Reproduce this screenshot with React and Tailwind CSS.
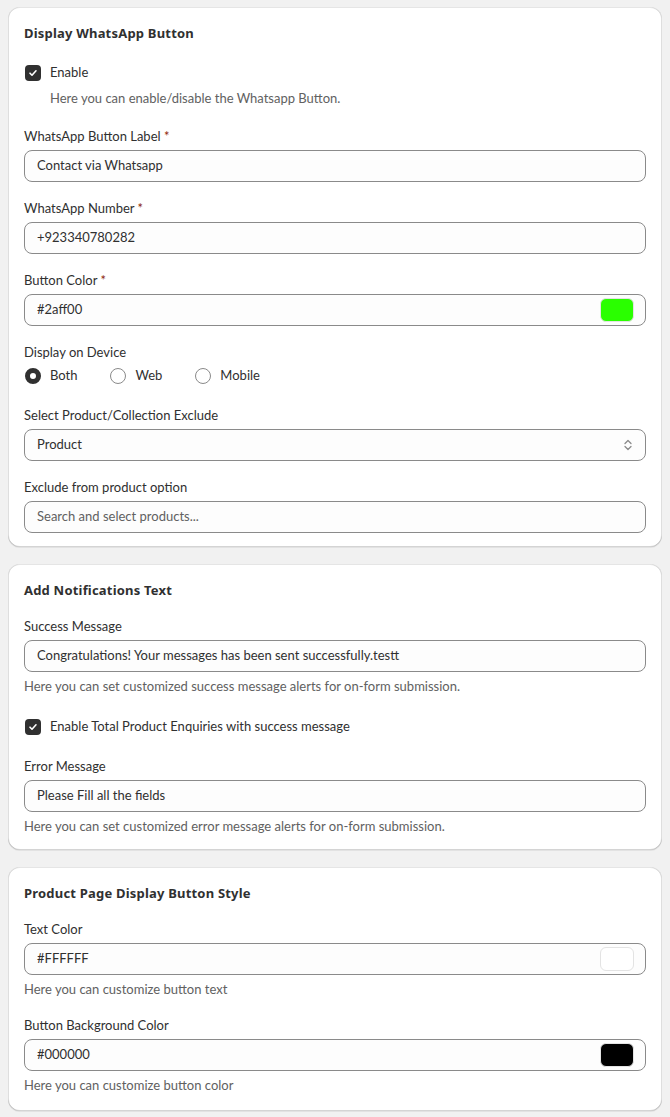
import { useState } from 'react'

const font = { fontFamily: 'Lato, "Noto Sans", sans-serif' }
const titleFont = { fontFamily: '"Noto Sans", Lato, sans-serif' }

function Label({ children, required }) {
  return (
    <div className="mb-1 h-5 text-[13px] leading-5 text-[#303030]">
      {children}
      {required && <span className="text-[#8e1f0b]"> *</span>}
    </div>
  )
}

function Help({ children, className = '' }) {
  return <div className={`h-5 text-[13px] leading-5 text-[#616161] ${className}`}>{children}</div>
}

function TextField({ value, placeholder, swatch }) {
  return (
    <div className="flex h-8 items-center rounded-lg border border-[#8a8a8a] bg-[#fdfdfd] pl-3 pr-3">
      <span className={`flex-1 text-[13px] ${value ? 'text-[#303030]' : 'text-[#616161]'}`}>
        {value || placeholder}
      </span>
      {swatch && (
        <span
          className="mr-[-1px] h-6 w-[34px] rounded-md border border-[#e3e3e3]"
          style={{ backgroundColor: swatch }}
        />
      )}
    </div>
  )
}

function Checkbox({ label }) {
  return (
    <div className="flex h-5 items-center gap-[9px]">
      <span className="ml-px flex h-4 w-4 items-center justify-center rounded-[4px] bg-[#303030]">
        <svg width="10" height="10" viewBox="0 0 10 10" fill="none">
          <path d="M2 5.2l2 2 4-4.4" stroke="white" strokeWidth="1.6" strokeLinecap="round" strokeLinejoin="round" />
        </svg>
      </span>
      <span className="text-[13px] text-[#303030]">{label}</span>
    </div>
  )
}

function Radio({ label, checked }) {
  return (
    <div className="flex items-center gap-[9px]">
      <span
        className={`ml-px h-4 w-4 rounded-full ${
          checked ? 'border-[5px] border-[#303030] bg-white' : 'border border-[#8a8a8a] bg-white'
        }`}
      />
      <span className="text-[13px] text-[#303030]">{label}</span>
    </div>
  )
}

function Card({ title, children, className = '' }) {
  return (
    <div className={`rounded-xl bg-white px-4 pt-4 shadow-[0_1px_0_0_rgba(26,26,26,0.07),0_1px_0_0_rgba(204,204,204,0.5)_inset,0_-1px_0_0_rgba(0,0,0,0.17)_inset,-1px_0_0_0_rgba(0,0,0,0.13)_inset,1px_0_0_0_rgba(0,0,0,0.13)_inset] ${className}`}>
      <h2 className="h-5 text-[13px] font-bold leading-5 tracking-[0.2px] text-[#303030]" style={titleFont}>
        {title}
      </h2>
      {children}
    </div>
  )
}

export default function App() {
  const [device] = useState('both')

  return (
    <div className="min-h-[1117px] bg-[#f1f1f1] px-2 pt-[7px]" style={font}>
      <div className="flex flex-col gap-[17px]">
        <Card title="Display WhatsApp Button" className="pb-[14px]">
          <div className="mt-5">
            <Checkbox label="Enable" />
            <Help className="mt-[5px] pl-[26px]">Here you can enable/disable the Whatsapp Button.</Help>
          </div>
          <div className="mt-[18px] flex flex-col gap-4">
            <div>
              <Label required>WhatsApp Button Label</Label>
              <TextField value="Contact via Whatsapp" />
            </div>
            <div>
              <Label required>WhatsApp Number</Label>
              <TextField value="+923340780282" />
            </div>
            <div>
              <Label required>Button Color</Label>
              <TextField value="#2aff00" swatch="#2aff00" />
            </div>
            <div>
              <Label>Display on Device</Label>
              <div className="flex h-5 items-center gap-8">
                <Radio label="Both" checked={device === 'both'} />
                <Radio label="Web" checked={device === 'web'} />
                <Radio label="Mobile" checked={device === 'mobile'} />
              </div>
            </div>
            <div className="mt-[3px]">
              <Label>Select Product/Collection Exclude</Label>
              <div className="flex h-8 items-center rounded-lg border border-[#8a8a8a] bg-[#fdfdfd] pl-3 pr-[11px]">
                <span className="flex-1 text-[13px] text-[#303030]">Product</span>
                <svg width="12" height="16" viewBox="0 0 12 16" fill="none">
                  <path d="M3 6.5l3-3 3 3M3 9.5l3 3 3-3" stroke="#8a8a8a" strokeWidth="1.3" strokeLinecap="round" strokeLinejoin="round" />
                </svg>
              </div>
            </div>
            <div>
              <Label>Exclude from product option</Label>
              <TextField placeholder="Search and select products..." />
            </div>
          </div>
        </Card>

        <Card title="Add Notifications Text" className="pb-[14px]">
          <div className="mt-4">
            <Label>Success Message</Label>
            <TextField value="Congratulations! Your messages has been sent successfully.testt" />
            <Help className="mt-1">Here you can set customized success message alerts for on-form submission.</Help>
          </div>
          <div className="mt-[21px]">
            <Checkbox label="Enable Total Product Enquiries with success message" />
          </div>
          <div className="mt-[19px]">
            <Label>Error Message</Label>
            <TextField value="Please Fill all the fields" />
            <Help className="mt-1">Here you can set customized error message alerts for on-form submission.</Help>
          </div>
        </Card>

        <Card title="Product Page Display Button Style" className="pb-4">
          <div className="mt-4">
            <Label>Text Color</Label>
            <TextField value="#FFFFFF" swatch="#FFFFFF" />
            <Help className="mt-1">Here you can customize button text</Help>
          </div>
          <div className="mt-4">
            <Label>Button Background Color</Label>
            <TextField value="#000000" swatch="#000000" />
            <Help className="mt-1">Here you can customize button color</Help>
          </div>
        </Card>
      </div>
    </div>
  )
}
